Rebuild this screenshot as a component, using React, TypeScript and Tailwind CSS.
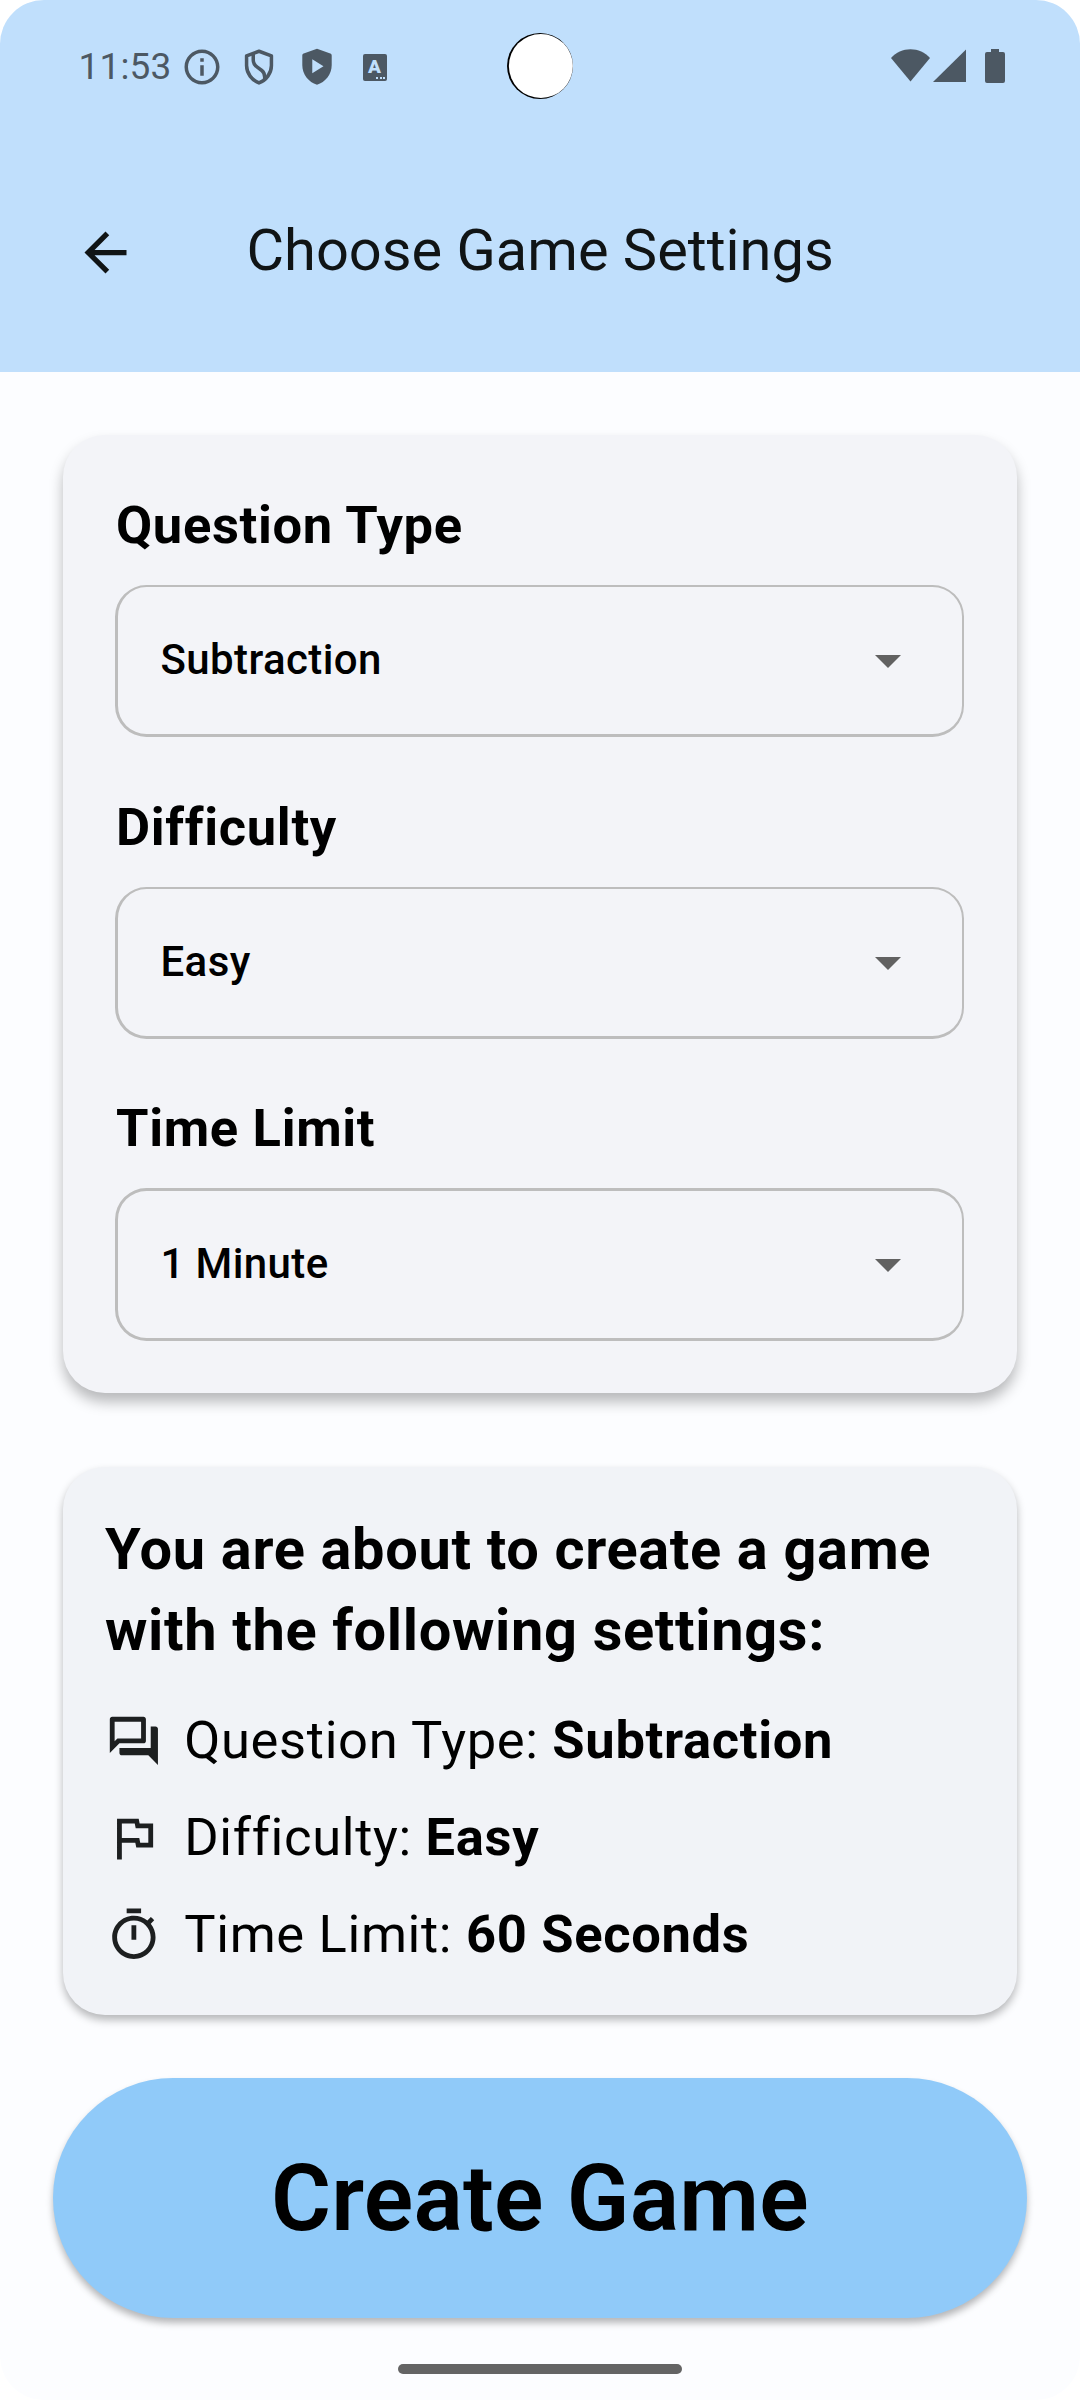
import type { ReactNode } from "react";

const SOFT = "#4c5863";

function StatusBar() {
  return (
    <div className="relative flex h-[133px] items-center pl-[78.5px] pr-[75px] text-[#4c5863]">
      <span className="w-[102px] whitespace-nowrap text-[37px] leading-[43px] tracking-[0.15px]">
        11:53
      </span>
      <div className="mt-[1px] flex items-center gap-[15.7px]">
        <svg className="size-[42px]" viewBox="0 0 24 24" fill="currentColor">
          <path d="M11 7h2v2h-2zm0 4h2v6h-2zm1-9C6.480 2 2 6.480 2 12s4.480 10 10 10 10-4.480 10-10S17.520 2 12 2zm0 18c-4.410 0-8-3.590-8-8s3.590-8 8-8 8 3.590 8 8-3.590 8-8 8z" />
        </svg>
        <svg
          className="size-[42px]"
          viewBox="0 0 24 24"
          fill="none"
          stroke="currentColor"
          strokeWidth="2"
          strokeLinejoin="round"
        >
          <path d="M12 3L4.900 5.600v5.600c0 4.400 3 8.300 7.100 9.900 4.100-1.600 7.100-5.500 7.100-9.900V5.600z" />
          <path d="M8.700 4.300v3.700c0 2 .8 3 2.300 4.100l2.600 1.900c1.600 1.200 1.900 2.400 1.600 5" />
        </svg>
        <svg className="size-[42px]" viewBox="0 0 24 24" fill="currentColor">
          <path
            fillRule="evenodd"
            d="M12 1.500L4.400 4.300C3.900 4.500 3.600 4.900 3.600 5.400V11c0 5.200 3.600 9.600 8.400 11.200 4.800-1.600 8.400-6 8.400-11.200V5.400c0-.5-.3-.9-.8-1.100zM9.300 7.500v8l6.400-4z"
          />
        </svg>
        <span className="flex size-[42px] items-center justify-center">
          <span className="relative flex h-[27px] w-[24px] items-center justify-center rounded-[2px] bg-[#4c5863] pb-[2px] text-[19px] leading-[19px] font-black text-[#c0dffc]">
            A
            <span className="absolute right-[1.5px] bottom-[2px] flex gap-[1.5px]">
              <span className="size-[2px] bg-[#c0dffc]" />
              <span className="size-[2px] bg-[#c0dffc]" />
              <span className="size-[2px] bg-[#c0dffc]" />
            </span>
          </span>
        </span>
      </div>

      <svg className="absolute top-[33px] left-[507px] size-[66px]" viewBox="0 0 66 66">
        <circle cx="33" cy="33" r="33" fill="#000" />
        <circle cx="33.900" cy="33" r="32" fill="#fff" />
      </svg>

      <div className="mb-[1px] ml-auto flex items-center">
        <svg className="h-[34px] w-[39px]" viewBox="0 0 39 34" fill={SOFT}>
          <path d="M0 9C5 3.500 12 .2 19.500 .2S34 3.500 39 9L19.500 32.500z" />
        </svg>
        <svg className="ml-[3px] h-[34px] w-[33px]" viewBox="0 0 33 34" fill={SOFT}>
          <path d="M33 .5V33H0z" />
        </svg>
        <svg className="ml-[19px] h-[34px] w-[20px]" viewBox="0 0 20 34" fill={SOFT}>
          <path d="M6 0h8v3h4a2 2 0 0 1 2 2v27a2 2 0 0 1-2 2H2a2 2 0 0 1-2-2V5a2 2 0 0 1 2-2h4z" />
        </svg>
      </div>
    </div>
  );
}

function Field({ label, value, last }: { label: string; value: string; last?: boolean }) {
  return (
    <div>
      <h2 className="mb-[27px] pl-[1px] text-[52.5px] leading-[66px] font-bold tracking-[0.656px] whitespace-nowrap">
        {label}
      </h2>
      <button
        className={
          "flex w-[849px] items-center justify-between rounded-[31.5px] border-[#bdbdbd] border-r-2 border-b-3 border-l-3 pr-[61px] pl-[42.5px] " +
          (last ? "h-[153px] border-t-3" : "h-[152px] border-t-2")
        }
      >
        <span className="pb-[2px] text-[42px] leading-[49px] font-medium tracking-[0.39px]">{value}</span>
        <svg className="mt-[2px] h-[13px] w-[26px]" viewBox="0 0 26 13" fill="#616161">
          <path d="M0 0h26L13 13z" />
        </svg>
      </button>
    </div>
  );
}

function SummaryRow({ icon, label, value }: { icon: ReactNode; label: string; value: string }) {
  return (
    <li className="flex h-[97px] items-center gap-[21.5px]">
      <svg className="mt-[1px] size-[57.75px] shrink-0" viewBox="0 0 24 24" fill="#1d1f20">
        {icon}
      </svg>
      <span className="pb-[1px] text-[52.5px] leading-[64px] tracking-[0.656px] whitespace-nowrap">
        {label}: <b className="font-bold">{value}</b>
      </span>
    </li>
  );
}

export default function App() {
  return (
    <div className="h-[2400px] w-[1080px] bg-white font-['Roboto',sans-serif] text-black">
      <div className="flex h-full flex-col overflow-hidden rounded-[44px] bg-[#fcfdff]">
        <header className="h-[372px] shrink-0 bg-[#c0dffc]">
          <StatusBar />
          <div className="flex h-[238px] items-center pl-[73.5px]">
            <svg className="size-[63px]" viewBox="0 0 24 24" fill="#101415">
              <path d="M20 11H7.830l5.590-5.590L12 4l-8 8 8 8 1.410-1.410L7.830 13H20v-2z" />
            </svg>
            <h1 className="ml-[110px] pb-[4px] text-[57.75px] leading-[68px] whitespace-nowrap text-[#101415]">
              Choose Game Settings
            </h1>
          </div>
        </header>

        <section className="mx-[63px] mt-[63px] flex h-[958px] shrink-0 flex-col gap-[56.5px] rounded-[42px] bg-[#f3f4f8] pt-[57px] pl-[52px] shadow-[0_9px_14px_rgba(0,0,0,0.27)]">
          <Field label="Question Type" value="Subtraction" />
          <Field label="Difficulty" value="Easy" />
          <Field label="Time Limit" value="1 Minute" last />
        </section>

        <section className="mx-[63px] mt-[74px] h-[548px] shrink-0 rounded-[42px] bg-[#f1f3f7] pt-[41.5px] pl-[42px] shadow-[0_5px_9px_rgba(0,0,0,0.28)]">
          <p className="text-[57.75px] leading-[81px] font-bold tracking-[0.656px] whitespace-nowrap">
            You are about to create a game
            <br />
            with the following settings:
          </p>
          <ul className="mt-[21.5px]">
            <SummaryRow
              label="Question Type"
              value="Subtraction"
              icon={
                <path d="M15 4v7H5.170L4 12.170V4h11m1-2H3c-.55 0-1 .45-1 1v14l4-4h10c.55 0 1-.45 1-1V3c0-.55-.45-1-1-1zm5 4h-2v9H6v2c0 .55.45 1 1 1h11l4 4V7c0-.55-.45-1-1-1z" />
              }
            />
            <SummaryRow
              label="Difficulty"
              value="Easy"
              icon={<path d="M12.360 6l.4 2H18v6h-3.360l-.4-2H7V6h5.360M14 4H5v17h2v-7h5.600l.4 2h7V6h-5.600L14 4z" />}
            />
            <SummaryRow
              label="Time Limit"
              value="60 Seconds"
              icon={
                <path d="M15 1H9v2h6V1zm-4 13h2V8h-2v6zm8.030-6.610l1.420-1.420c-.43-.51-.9-.99-1.410-1.410l-1.420 1.420C16.070 4.740 14.120 4 12 4c-4.970 0-9 4.030-9 9s4.020 9 9 9 9-4.030 9-9c0-2.120-.74-4.070-1.970-5.610zM12 20c-3.870 0-7-3.130-7-7s3.130-7 7-7 7 3.130 7 7-3.130 7-7 7z" />
              }
            />
          </ul>
        </section>

        <button className="mx-[53px] mt-[63px] flex h-[240px] shrink-0 items-center justify-center rounded-full bg-[#90caf9] pt-[1px] text-[91.875px] leading-[107px] font-semibold tracking-[0.25px] shadow-[0_5px_7px_rgba(0,0,0,0.28)]">
          Create Game
        </button>

        <div className="mx-auto mt-[46px] h-[10px] w-[284px] shrink-0 rounded-full bg-[#646464]" />
      </div>
    </div>
  );
}
